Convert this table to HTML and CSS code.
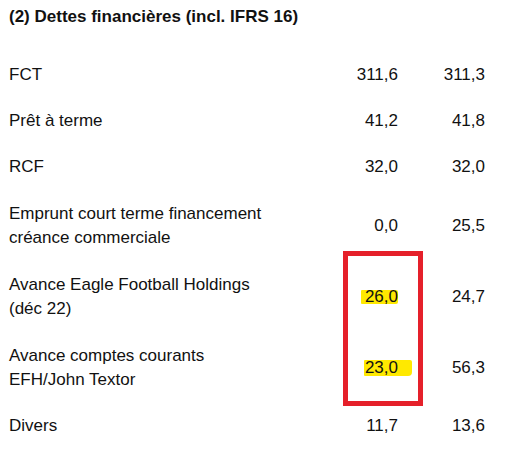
FILE: index.html
```html
<!DOCTYPE html>
<html lang="fr">
<head>
<meta charset="utf-8">
<link rel="stylesheet" href="styles.css">
</head>
<body>
<div class="page">
  <h1 class="title">(2) Dettes financières (incl. IFRS 16)</h1>
  <div class="table">
    <div class="row">
      <div class="label">FCT</div>
      <div class="val">311,6</div>
      <div class="val">311,3</div>
    </div>
    <div class="row">
      <div class="label">Prêt à terme</div>
      <div class="val">41,2</div>
      <div class="val">41,8</div>
    </div>
    <div class="row">
      <div class="label">RCF</div>
      <div class="val">32,0</div>
      <div class="val">32,0</div>
    </div>
    <div class="row two">
      <div class="label">Emprunt court terme financement<br>créance commerciale</div>
      <div class="val">0,0</div>
      <div class="val">25,5</div>
    </div>
    <div class="row two">
      <div class="label">Avance Eagle Football Holdings<br>(déc 22)</div>
      <div class="val"><span class="hl hl-a">26,0</span></div>
      <div class="val">24,7</div>
    </div>
    <div class="row two">
      <div class="label">Avance comptes courants<br>EFH/John Textor</div>
      <div class="val"><span class="hl hl-b">23,0</span></div>
      <div class="val">56,3</div>
    </div>
    <div class="row">
      <div class="label">Divers</div>
      <div class="val">11,7</div>
      <div class="val">13,6</div>
    </div>
    <div class="redbox"></div>
  </div>
</div>
</body>
</html>
```
FILE: styles.css
```css
html, body {
  margin: 0;
  padding: 0;
  background: #ffffff;
}
.page {
  font-family: "Liberation Sans", Arial, sans-serif;
  font-size: 17px;
  line-height: 24px;
  color: #111111;
  padding: 5px 26px 0 9px;
  position: relative;
}
.title {
  margin: 0;
  font-size: 17px;
  line-height: 24px;
  font-weight: bold;
}
.table {
  margin-top: 23px;
  position: relative;
}
.row {
  display: grid;
  grid-template-columns: 1fr 90px 87px;
  align-items: center;
  padding: 11px 0;
}
.row.two {
  padding: 11.5px 0;
}
.val {
  text-align: right;
}
.hl {
  position: relative;
  z-index: 0;
}
.hl::before {
  content: "";
  position: absolute;
  z-index: -1;
  background: #ffe900;
}
.hl-a::before {
  left: -4px;
  right: 0;
  top: 3px;
  bottom: 2px;
  border-radius: 1px 2px 2px 1px;
}
.hl-b::before {
  left: -1px;
  right: -14px;
  top: 2px;
  bottom: 1px;
  border-radius: 1px 2px 4px 1px;
}
.redbox {
  position: absolute;
  left: 334px;
  top: 199px;
  width: 70px;
  height: 145px;
  border: 5px solid #e5202a;
}
```
